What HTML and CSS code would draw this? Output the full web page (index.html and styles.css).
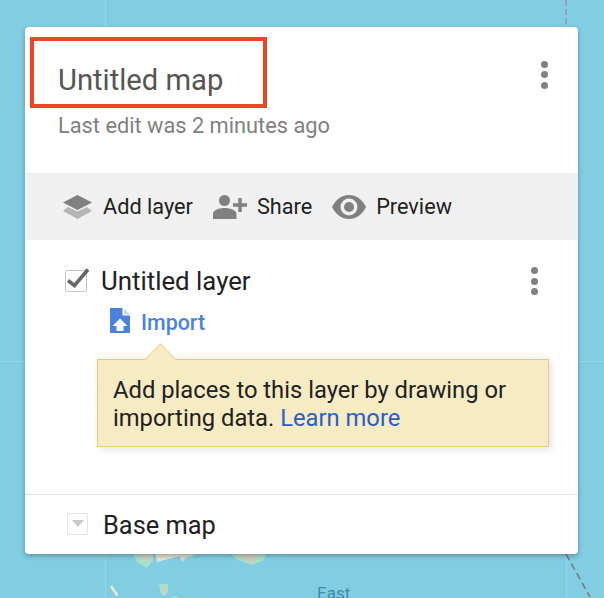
FILE: index.html
```html
<!DOCTYPE html>
<html lang="en">
<head>
    <meta charset="UTF-8">
    <title>Untitled map</title>
    <link rel="stylesheet" href="styles.css">
</head>
<body>

<svg class="map" width="604" height="598" viewBox="0 0 604 598">
    <path d="M0 361.500H604M105.500 0V598M566.500 27V598" stroke="#95d6e8" fill="none"/>
    <path d="M566 0V27" stroke="#8e979c" stroke-width="1.500" stroke-dasharray="6 3" fill="none"/>
    <path d="M566 554L590 597" stroke="#7b7480" stroke-width="1.500" stroke-dasharray="7 4" fill="none"/>
    <!-- islands under the panel edge -->
    <path d="M132 552L137 562L147 568L153 560V552Z" fill="#a9e0c8"/>
    <path d="M139 552L142 559L149 562L151 552Z" fill="#cfcfc8"/>
    <path d="M155 552L157 562L180 556V552Z" fill="#e8e3d6"/>
    <path d="M178 552L182 562L186 558L197 554V552Z" fill="#d8ddd0"/>
    <path d="M228 552L238 560L252 565L264 560L267 552Z" fill="#a9e0c8"/>
    <path d="M236 552L244 559L253 564L258 552Z" fill="#cfcbc4"/>
    <path d="M110 587L112 585L118 594L117 597Z" fill="#e9e6d0"/>
    <path d="M159 584H168V592L164 596L160 592Z" fill="#a9e0c8"/>
    <path d="M161 589H167V592L164 595Z" fill="#cfcfc8"/>
    <path d="M170 598L175 596L180 598Z" fill="#a9e0c8"/>
    <text class="map-label" x="317" y="599">East</text>
</svg>

<div class="panel">
    <div class="panel-header">
        <div class="header-text">
            <h1>Untitled map</h1>
            <p>Last edit was 2 minutes ago</p>
        </div>
        <div class="more">
            <span></span><span></span><span></span>
        </div>
    </div>

    <div class="toolbar">
        <a class="tool">
            <svg width="30" height="24" viewBox="0 0 30 24">
                <path d="M14.500 0L29 7.500L14.500 15L0 7.500Z" fill="#808080"/>
                <path d="M5 12L14.500 16.500L24 12L29 16L14.500 24L0 16Z" fill="#b5b5b5"/>
            </svg>
            Add layer
        </a>
        <a class="tool">
            <svg width="34" height="24" viewBox="0 0 34 24">
                <circle cx="11.500" cy="5.500" r="5.500" fill="#808080"/>
                <path d="M0 24V19C0 15 6 13 11.500 13C17 13 23.500 15 23.500 19V24Z" fill="#808080"/>
                <path d="M20 10H34M27 3V17" stroke="#808080" stroke-width="3.500" fill="none"/>
            </svg>
            Share
        </a>
        <a class="tool">
            <svg width="34" height="24" viewBox="0 0 34 24">
                <path d="M0 12C4 4 10 0 17 0C24 0 30 4 34 12C30 20 24 24 17 24C10 24 4 20 0 12Z" fill="#808080"/>
                <circle cx="17" cy="12" r="8.500" fill="#f0f0f0"/>
                <circle cx="17" cy="12" r="5" fill="#808080"/>
            </svg>
            Preview
        </a>
    </div>

    <div class="layer">
        <div class="layer-row">
            <div class="checkbox">
                <svg width="28" height="24" viewBox="0 0 28 24">
                    <path d="M5 14.500L11.500 19.500L25 3.500" stroke="#666" stroke-width="3.500" fill="none"/>
                </svg>
            </div>
            <span class="layer-name">Untitled layer</span>
            <div class="more">
                <span></span><span></span><span></span>
            </div>
        </div>
        <a class="import">
            <svg width="20" height="25" viewBox="0 0 20 25">
                <path d="M0 0H12.500V7.500H20V25H0Z" fill="#4a82dc"/>
                <path d="M14 0.500L20 6.500H14Z" fill="#c4d6f4"/>
                <path d="M10 10.500L17.500 18H13.500V23H6.500V18H2.500Z" fill="#fff"/>
            </svg>
            <span>Import</span>
        </a>
        <div class="tip">
            <svg class="tip-arrow" width="34" height="18" viewBox="0 0 34 18">
                <path d="M0.500 17L16.500 0.700L32.500 17" fill="#f6ebc3" stroke="#edc878"/>
            </svg>
            Add places to this layer by drawing or importing data. <a>Learn more</a>
        </div>
    </div>

    <div class="base-row">
        <div class="base-toggle"></div>
        <span>Base map</span>
    </div>

    <div class="highlight"></div>
</div>

</body>
</html>
```

FILE: styles.css
```css
body {
    margin: 0;
    width: 604px;
    height: 598px;
    overflow: hidden;
    background-color: #81cee3;
    font-family: Roboto, Arial, sans-serif;
    color: #212121;
}
.map {
    position: absolute;
    left: 0;
    top: 0;
}
.map-label {
    font-size: 17px;
    fill: #3f8ba3;
}
.panel {
    position: absolute;
    left: 25px;
    top: 27px;
    width: 553px;
    height: 527px;
    display: flex;
    flex-direction: column;
    background: white;
    border-radius: 4px;
    box-shadow: 0 2px 5px rgba(0, 0, 0, 0.3);
}
.panel-header {
    height: 146px;
    box-sizing: border-box;
    padding: 31px 30px 0 33px;
    display: flex;
    justify-content: space-between;
}
h1 {
    margin: 0;
    font-size: 29.2px;
    font-weight: 400;
    line-height: 44px;
    color: #555;
}
.header-text p {
    margin: 12px 0 0 0;
    font-size: 21.8px;
    line-height: 24px;
    color: #808080;
}
.more {
    display: flex;
    flex-direction: column;
    gap: 3.7px;
    padding-top: 2.5px;
}
.more span {
    width: 7px;
    height: 7px;
    border-radius: 50%;
    background-color: #808080;
}
.toolbar {
    height: 67px;
    box-sizing: border-box;
    padding-left: 38px;
    display: flex;
    align-items: center;
    gap: 20px;
    background-color: #f0f0f0;
}
.tool {
    display: flex;
    align-items: center;
    gap: 10px;
    font-size: 21.7px;
}
.layer {
    flex: 1;
    padding: 24px 0 0 40px;
}
.layer-row {
    display: flex;
    align-items: center;
    height: 34px;
    padding-right: 40.5px;
}
.layer-row .more {
    margin-left: auto;
    padding-top: 0;
}
.checkbox {
    width: 20px;
    height: 20px;
    border: 1px solid #c4c4c4;
    border-radius: 2px;
    margin: -1px 14px 0 0;
    position: relative;
}
.checkbox svg {
    position: absolute;
    left: -3px;
    top: -5px;
}
.layer-name {
    font-size: 25.8px;
}
.import {
    display: flex;
    align-items: center;
    gap: 11px;
    margin: 10px 0 0 45px;
    font-size: 21.4px;
    font-weight: 500;
    color: #4a82dc;
}
.import span {
    line-height: 20px;
    padding-top: 5px;
}
.tip {
    position: relative;
    width: 452px;
    height: 88px;
    box-sizing: border-box;
    margin: 26px 0 0 32px;
    padding: 16px 15px;
    background-color: #f6ebc3;
    border: 1px solid #edc878;
    box-shadow: 2px 2px 8px rgba(0, 0, 0, 0.12);
    font-size: 23.75px;
    line-height: 28px;
}
.tip a {
    color: #2a5fc4;
}
.tip-arrow {
    position: absolute;
    left: 46px;
    top: -17px;
}
.base-row {
    height: 60px;
    box-sizing: border-box;
    border-top: 1px solid #e3e3e3;
    padding-left: 42px;
    display: flex;
    align-items: center;
    gap: 15px;
    font-size: 25.4px;
}
.base-toggle {
    position: relative;
    width: 19px;
    height: 20px;
    margin-top: -2px;
    border: 1px solid #e6e6e6;
}
.base-toggle::after {
    content: "";
    position: absolute;
    left: 4px;
    top: 6px;
    border-left: 6px solid transparent;
    border-right: 6px solid transparent;
    border-top: 7px solid #c8c8c8;
}
.highlight {
    position: absolute;
    left: 5px;
    top: 10px;
    width: 237px;
    height: 71px;
    box-sizing: border-box;
    border: 4px solid #ee4525;
}
```
